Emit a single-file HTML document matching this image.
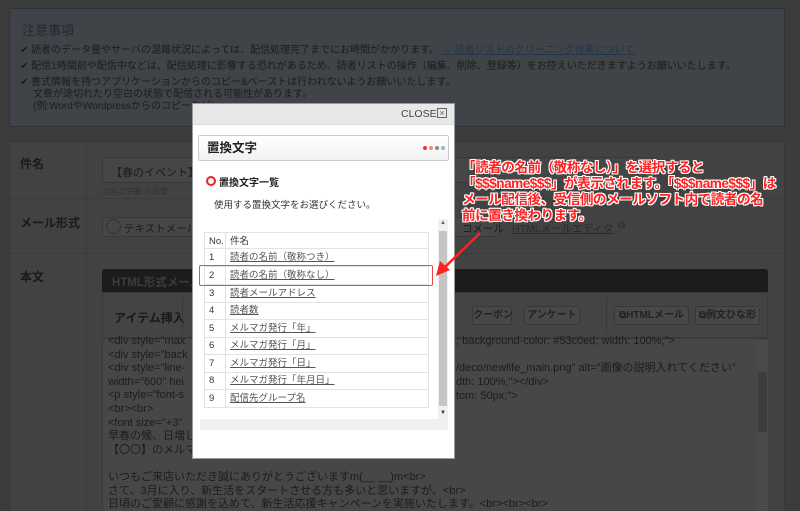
<!DOCTYPE html>
<html style="width:800px;height:511px;overflow:hidden"><head><meta charset="utf-8">
<style>
*{margin:0;padding:0;box-sizing:border-box}
body{width:800px;height:511px;overflow:hidden;background:#3c3c3c;font-family:"Liberation Sans","Noto Sans CJK JP",sans-serif;font-size:11px;color:#1a1a1a;position:relative}
.a{position:absolute;white-space:nowrap}
.note{left:9px;top:8px;width:776px;height:119px;background:#404347;border:1px solid #2e3338}
.form{left:9px;top:141px;width:776px;height:380px;background:#424242;border:1px solid #383838}
.lbl{font-weight:bold;font-size:12px;color:#1a1a1a}
.sep{height:0;border-top:1px dotted #353535}
.btn{border:1px solid #383838;border-radius:3px;background:#484848;height:19px;font-size:10px;font-weight:bold;color:#222;text-align:center;line-height:17px}
.modal{left:192px;top:103px;width:263px;height:356px;background:#fff;border:1px solid #999}
.ed{font-size:11px;color:#1c1c1c;line-height:13.6px}
.row{position:absolute;left:204px;width:225px;height:18px;border:1px solid #e2e2e2;border-top:none;font-size:9.5px;color:#333;line-height:17px}
.row span{position:absolute;left:4px}
.row i{position:absolute;left:20px;top:0;height:17px;border-left:1px solid #e2e2e2}
.row u{position:absolute;left:25px;color:#555}
.ann{left:462px;top:160px;font-size:13.6px;font-weight:bold;color:#ff2020;line-height:16px;letter-spacing:-0.5px;text-shadow:1px 0 #fff,-1px 0 #fff,0 1px #fff,0 -1px #fff,1px 1px #fff,-1px -1px #fff,1px -1px #fff,-1px 1px #fff}
</style></head><body>
<div class="a note"></div>
<div class="a" style="left:22px;top:20px;font-size:13px;color:#1f2a33">注意事項</div>
<div class="a" style="left:20px;top:45px;color:#1c1c1c;font-size:10px;line-height:12px">
<div>✔ 読者のデータ量やサーバの混雑状況によっては、配信処理完了までにお時間がかかります。 <span style="color:#23354a;text-decoration:underline">→ 読者リストのクリーニング作業について</span></div>
<div style="margin-top:4px">✔ 配信1時間前や配信中などは、配信処理に影響する恐れがあるため、読者リストの操作（編集、削除、登録等）をお控えいただきますようお願いいたします。</div>
<div style="margin-top:4px">✔ 書式情報を持つアプリケーションからのコピー&amp;ペーストは行われないようお願いいたします。</div>
<div style="padding-left:13px">文章が途切れたり空白の状態で配信される可能性があります。</div>
<div style="padding-left:13px">(例:WordやWordpressからのコピーなど)</div>
</div>

<div class="a form"></div>
<div class="a" style="left:86px;top:142px;width:0;height:369px;border-left:1px dotted #383838"></div>
<div class="a lbl" style="left:20px;top:155px">件名</div>
<div class="a" style="left:102px;top:157px;width:553px;height:26px;border:1px solid #383838;border-radius:3px;background:#464646;padding:6px 8px;font-size:11px">【春のイベント】全</div>
<div class="a" style="left:102px;top:186px;font-size:8px;color:#333">全角文字数 ※目安</div>
<div class="a sep" style="left:10px;top:198px;width:774px"></div>
<div class="a lbl" style="left:20px;top:214px">メール形式</div>
<div class="a" style="left:102px;top:217px;width:398px;height:20px;border:1px solid #383838;border-radius:3px;background:#464646"></div>
<div class="a" style="left:106px;top:219px;width:15px;height:15px;border:1px solid #333;border-radius:50%"></div>
<div class="a" style="left:124px;top:221px;font-size:10.5px">テキストメール</div>
<div class="a" style="left:462px;top:221px;font-size:10.5px">コメール</div>
<div class="a" style="left:512px;top:221px;font-size:10.5px;text-decoration:underline;color:#2a2a2a">HTMLメールエディタ</div>
<div class="a" style="left:618px;top:220px;font-size:10px;color:#2a2a2a">⧉</div>
<div class="a sep" style="left:10px;top:253px;width:774px"></div>
<div class="a lbl" style="left:20px;top:268px">本文</div>
<div class="a" style="left:102px;top:269px;width:666px;height:23px;background:#1c1c1c;border-radius:3px 3px 0 0;color:#3c3c3c;font-weight:bold;font-size:11.5px;padding:5px 10px">HTML形式メール</div>
<div class="a" style="left:102px;top:292px;width:666px;height:46px;background:#444;border:1px solid #3a3a3a"></div>
<div class="a lbl" style="left:114px;top:309px">アイテム挿入</div>
<div class="a" style="left:182px;top:297px;height:36px;border-left:1px solid #383838"></div>
<div class="a btn" style="left:472px;top:306px;width:40px">クーポン</div>
<div class="a btn" style="left:524px;top:306px;width:56px">アンケート</div>
<div class="a" style="left:606px;top:297px;height:36px;border-left:1px solid #383838"></div>
<div class="a btn" style="left:614px;top:306px;width:75px">⧉HTMLメール</div>
<div class="a btn" style="left:695px;top:306px;width:65px">⧉例文ひな形</div>
<div class="a" style="left:102px;top:338px;width:666px;height:180px;background:#474747;border:1px solid #3a3a3a"></div>
<div class="a" style="left:757px;top:340px;width:11px;height:171px;background:#4a4a4a"></div>
<div class="a" style="left:758px;top:372px;width:9px;height:60px;background:#3d3d3d"></div>
<div class="a ed" style="left:108px;top:335px">&lt;div style="max<br>&lt;div style="back<br>&lt;div style="line-<br>width="600" hei<br>&lt;p style="font-s<br>&lt;br&gt;&lt;br&gt;<br>&lt;font size="+3"<br>早春の候、日増しに<br>【〇〇】のメルマガ<br><br>いつもご来店いただき誠にありがとうございますm(__ __)m&lt;br&gt;<br>さて、3月に入り、新生活をスタートさせる方も多いと思いますが、&lt;br&gt;<br>日頃のご愛顧に感謝を込めて、新生活応援キャンペーンを実施いたします。&lt;br&gt;&lt;br&gt;&lt;br&gt;</div>
<div class="a ed" style="left:456px;top:335px">; background-color: #53c0ed; width: 100%;"&gt;</div>
<div class="a ed" style="left:456px;top:362px">/deco/newlife_main.png" alt="画像の説明入れてください"</div>
<div class="a ed" style="left:456px;top:376px">dth: 100%;"&gt;&lt;/div&gt;</div>
<div class="a ed" style="left:456px;top:390px">tom: 50px;"&gt;</div>

<div class="a modal"></div>
<div class="a" style="left:193px;top:104px;width:261px;height:21px;background:#e8e8e8;border-bottom:1px dotted #ccc"></div>
<div class="a" style="left:401px;top:108px;font-size:10.5px;color:#444">CLOSE</div>
<div class="a" style="left:437px;top:108px;width:10px;height:10px;border:1px solid #666;font-size:9px;line-height:8px;text-align:center;color:#666">×</div>
<div class="a" style="left:198px;top:135px;width:251px;height:26px;border:1px solid #ccc;border-radius:2px;background:linear-gradient(#fff,#f2f2f2);padding:3px 8px;font-size:12.5px;line-height:18px;font-weight:bold;color:#222">置換文字</div>
<div class="a" style="left:423px;top:146px;width:4px;height:4px;border-radius:50%;background:#e33"></div>
<div class="a" style="left:429px;top:146px;width:4px;height:4px;border-radius:50%;background:#e88"></div>
<div class="a" style="left:435px;top:146px;width:4px;height:4px;border-radius:50%;background:#888"></div>
<div class="a" style="left:441px;top:146px;width:4px;height:4px;border-radius:50%;background:#8bc"></div>
<div class="a" style="left:206px;top:176px;width:10px;height:10px;border:2.5px solid #e22;border-radius:50%"></div>
<div class="a" style="left:219px;top:174px;font-size:10px;font-weight:bold;color:#222">置換文字一覧</div>
<div class="a" style="left:214px;top:197px;font-size:9.5px;color:#333">使用する置換文字をお選びください。</div>
<div class="a" style="left:438px;top:219px;width:10px;height:200px;background:#f0f0f0"></div>
<div class="a" style="left:439px;top:231px;width:8px;height:175px;background:#c4c4c4"></div>
<div class="a" style="left:440px;top:220px;font-size:6px;color:#666">▲</div>
<div class="a" style="left:440px;top:410px;font-size:6px;color:#333">▼</div>
<div class="a" style="left:200px;top:419px;width:248px;height:11px;background:#f0f0f0"></div>
<div class="row" style="top:232px;height:17px;border-top:1px solid #e2e2e2"><span>No.</span><i></i><b style="position:absolute;left:25px;font-weight:normal">件名</b></div>
<div class="row" style="top:249px"><span>1</span><i></i><u>読者の名前（敬称つき）</u></div>
<div class="row" style="top:267px"><span>2</span><i></i><u>読者の名前（敬称なし）</u></div>
<div class="row" style="top:285px"><span>3</span><i></i><u>読者メールアドレス</u></div>
<div class="row" style="top:302px"><span>4</span><i></i><u>読者数</u></div>
<div class="row" style="top:320px"><span>5</span><i></i><u>メルマガ発行「年」</u></div>
<div class="row" style="top:337px"><span>6</span><i></i><u>メルマガ発行「月」</u></div>
<div class="row" style="top:355px"><span>7</span><i></i><u>メルマガ発行「日」</u></div>
<div class="row" style="top:372px"><span>8</span><i></i><u>メルマガ発行「年月日」</u></div>
<div class="row" style="top:390px"><span>9</span><i></i><u>配信先グループ名</u></div>
<div class="a" style="left:199px;top:265px;width:234px;height:21px;border:1.5px solid #f04848;border-radius:2px"></div>

<div class="a ann">「読者の名前（敬称なし）」を選択すると<br>「$$$name$$$」が表示されます。「$$$name$$$」は<br>メール配信後、受信側のメールソフト内で読者の名<br>前に置き換わります。</div>
<svg class="a" style="left:430px;top:225px" width="60" height="60"><line x1="50" y1="8" x2="14" y2="43" stroke="#f22" stroke-width="2.5"/><polygon points="6,51 10,36 20,45" fill="#f22"/></svg>
</body></html>
